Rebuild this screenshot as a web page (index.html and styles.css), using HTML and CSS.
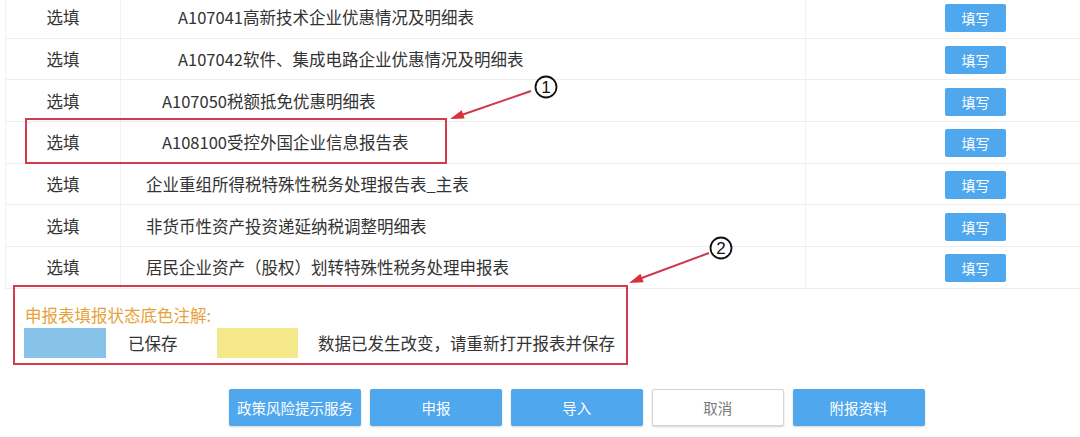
FILE: index.html
```html
<!DOCTYPE html>
<html lang="zh-CN">
<head>
<meta charset="utf-8">
<title>申报表列表</title>
<link rel="stylesheet" href="styles.css">
</head>
<body>
<div class="page">
  <div class="table">
    <div class="row">
      <div class="cell cell-type">选填</div>
      <div class="cell cell-name lvl-2">A107041高新技术企业优惠情况及明细表</div>
      <div class="cell cell-op"><button class="fill-btn">填写</button></div>
    </div>
    <div class="row">
      <div class="cell cell-type">选填</div>
      <div class="cell cell-name lvl-2">A107042软件、集成电路企业优惠情况及明细表</div>
      <div class="cell cell-op"><button class="fill-btn">填写</button></div>
    </div>
    <div class="row">
      <div class="cell cell-type">选填</div>
      <div class="cell cell-name lvl-1">A107050税额抵免优惠明细表</div>
      <div class="cell cell-op"><button class="fill-btn">填写</button></div>
    </div>
    <div class="row">
      <div class="cell cell-type">选填</div>
      <div class="cell cell-name lvl-1">A108100受控外国企业信息报告表</div>
      <div class="cell cell-op"><button class="fill-btn">填写</button></div>
    </div>
    <div class="row">
      <div class="cell cell-type">选填</div>
      <div class="cell cell-name">企业重组所得税特殊性税务处理报告表_主表</div>
      <div class="cell cell-op"><button class="fill-btn">填写</button></div>
    </div>
    <div class="row">
      <div class="cell cell-type">选填</div>
      <div class="cell cell-name">非货币性资产投资递延纳税调整明细表</div>
      <div class="cell cell-op"><button class="fill-btn">填写</button></div>
    </div>
    <div class="row">
      <div class="cell cell-type">选填</div>
      <div class="cell cell-name">居民企业资产（股权）划转特殊性税务处理申报表</div>
      <div class="cell cell-op"><button class="fill-btn">填写</button></div>
    </div>
  </div>

  <div class="legend">
    <div class="legend-title">申报表填报状态底色注解:</div>
    <div class="legend-row">
      <span class="swatch swatch-saved"></span>
      <span class="legend-label label-saved">已保存</span>
      <span class="swatch swatch-changed"></span>
      <span class="legend-label label-changed">数据已发生改变，请重新打开报表并保存</span>
    </div>
  </div>

  <div class="actions">
    <button class="btn">政策风险提示服务</button>
    <button class="btn">申报</button>
    <button class="btn">导入</button>
    <button class="btn btn-ghost">取消</button>
    <button class="btn">附报资料</button>
  </div>

  <svg class="annotations" width="1080" height="437" viewBox="0 0 1080 437" aria-hidden="true">
    <rect x="26" y="122" width="420" height="44" class="anno-box"/>
    <rect x="14" y="289" width="613" height="78" class="anno-box"/>
    <line x1="531" y1="94" x2="460" y2="118.5" class="anno-line"/>
    <polygon points="450,122 464.7,121.6 461.7,113.2" class="anno-head"/>
    <line x1="709" y1="256" x2="639" y2="282" class="anno-line"/>
    <polygon points="629,286 643.7,285.2 640.5,276.8" class="anno-head"/>
    <circle cx="546" cy="90" r="10.5" class="anno-circle"/>
    <text x="546" y="96" class="anno-num">1</text>
    <circle cx="721" cy="251" r="10.5" class="anno-circle"/>
    <text x="721" y="257" class="anno-num">2</text>
  </svg>
</div>
</body>
</html>
```

FILE: styles.css
```css
html, body {
  margin: 0;
  padding: 0;
  background: #ffffff;
}

body {
  font-family: "Noto Sans CJK SC", "Noto Sans", sans-serif;
  color: #333333;
  width: 1080px;
  height: 437px;
  overflow: hidden;
}

.page {
  position: relative;
  width: 1080px;
  height: 437px;
}

.table {
  margin: -3px 0 0 5px;
  border-left: 1px solid #f1f1f1;
}

.row {
  display: grid;
  grid-template-columns: 114px 685px 1fr;
  height: 41.67px;
  box-sizing: border-box;
  border-bottom: 1px solid #eeeeee;
}

.cell {
  display: flex;
  align-items: center;
  font-size: 16.5px;
  white-space: nowrap;
}

.cell-type {
  justify-content: center;
}

.cell-name {
  border-left: 1px solid #f1f1f1;
  padding-left: 25px;
}

.cell-name.lvl-1 {
  padding-left: 41px;
}

.cell-name.lvl-2 {
  padding-left: 57px;
}

.cell-op {
  border-left: 1px solid #f1f1f1;
  padding-left: 139px;
}

.fill-btn {
  width: 61px;
  height: 28px;
  margin-top: 2px;
  border: none;
  border-radius: 2px;
  background: #4fa7ee;
  color: #ffffff;
  font-family: "Noto Sans CJK SC", sans-serif;
  font-size: 14px;
  padding: 0;
}

.legend {
  padding-left: 24px;
}

.legend-title {
  margin-top: 16px;
  height: 20px;
  line-height: 20px;
  font-size: 16.5px;
  color: #e7a23c;
  padding-left: 1px;
}

.legend-row {
  display: flex;
  align-items: center;
  margin-top: 3px;
  height: 30px;
}

.swatch {
  display: block;
  height: 30px;
}

.swatch-saved {
  width: 82px;
  background: #87c3e9;
}

.swatch-changed {
  width: 81px;
  margin-left: 39.5px;
  background: #f4e88b;
}

.legend-label {
  font-size: 16.5px;
  color: #333333;
}

.label-saved {
  margin-left: 22px;
}

.label-changed {
  margin-left: 20px;
}

.actions {
  display: flex;
  gap: 8.9px;
  padding-left: 229px;
  margin-top: 31px;
}

.btn {
  width: 132px;
  height: 37px;
  border: none;
  border-radius: 2px;
  background: #4fa7ee;
  color: #ffffff;
  font-family: "Noto Sans CJK SC", sans-serif;
  font-size: 14.5px;
  padding: 0;
  box-shadow: 0 1px 2px rgba(0, 0, 0, 0.18);
}

.btn-ghost {
  background: #ffffff;
  border: 1px solid #d4d4d4;
  color: #7a7a7a;
}

.annotations {
  position: absolute;
  left: 0;
  top: 0;
  pointer-events: none;
}

.anno-box {
  fill: none;
  stroke: #d03c4b;
  stroke-width: 2;
}

.anno-line {
  stroke: #cc3a4c;
  stroke-width: 2;
}

.anno-head {
  fill: #d9303f;
}

.anno-circle {
  fill: #ffffff;
  stroke: #111111;
  stroke-width: 1.8;
}

.anno-num {
  font-family: "Liberation Sans", sans-serif;
  font-size: 17px;
  text-anchor: middle;
  fill: #111111;
}
```
